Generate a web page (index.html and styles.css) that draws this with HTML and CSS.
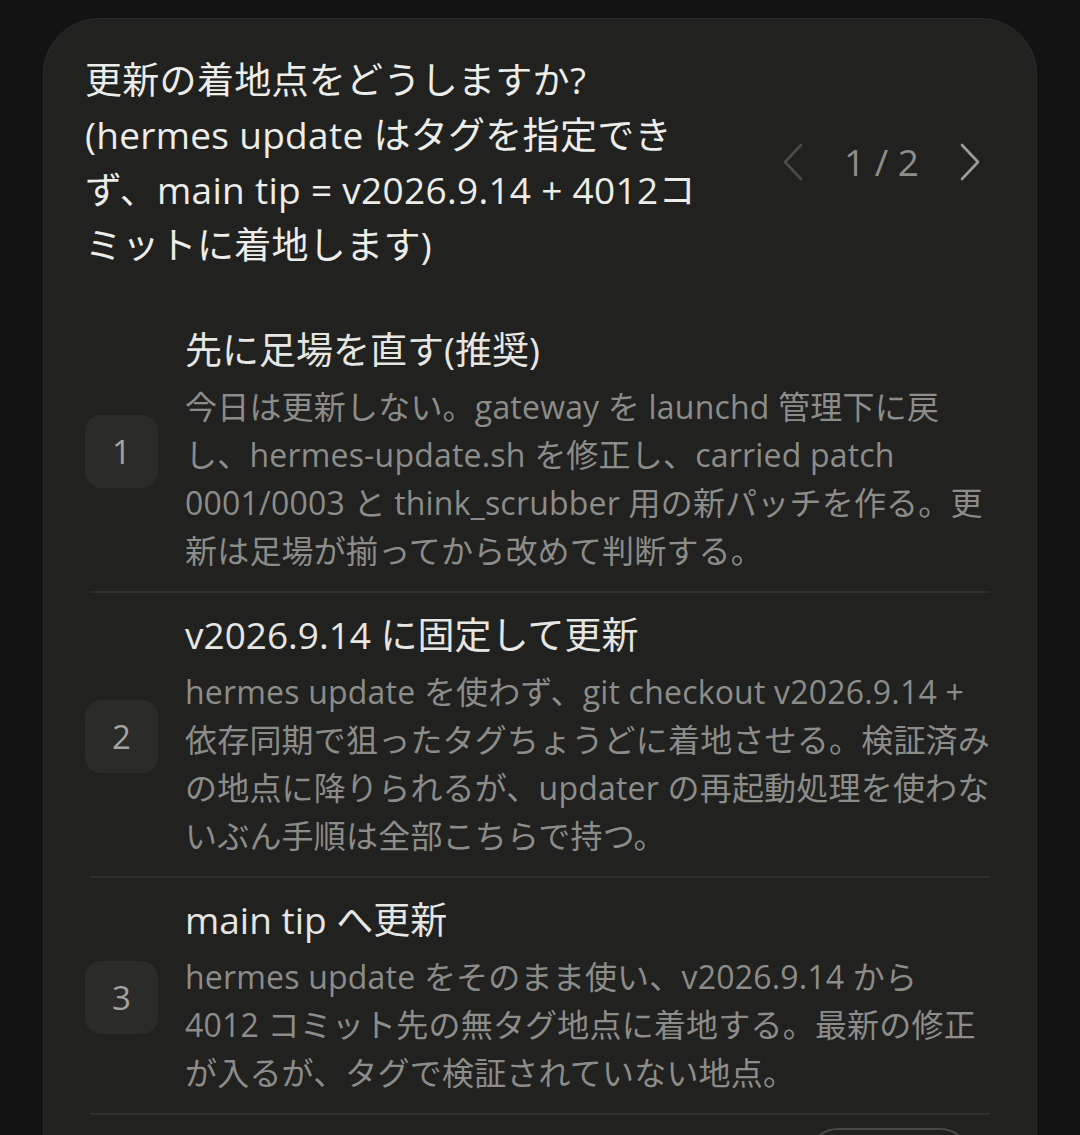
FILE: index.html
```html
<!DOCTYPE html>
<html lang="ja">
<head>
<meta charset="utf-8">
<title>更新の着地点</title>
<link rel="stylesheet" href="styles.css">
</head>
<body>
<div class="card">
  <div class="header">
    <div class="question">更新の着地点をどうしますか?<br>(hermes update はタグを指定でき<br>ず、main tip = v2026.9.14 + 4012コ<br>ミットに着地します)</div>
    <div class="pager">
      <svg class="chev chev-prev" width="22" height="38" viewBox="0 0 22 38"><path d="M19 2 L3 19 L19 36" fill="none" stroke="currentColor" stroke-width="2.6" stroke-linecap="round" stroke-linejoin="round"/></svg>
      <span class="pager-text">1 / 2</span>
      <svg class="chev chev-next" width="22" height="38" viewBox="0 0 22 38"><path d="M3 2 L19 19 L3 36" fill="none" stroke="currentColor" stroke-width="2.6" stroke-linecap="round" stroke-linejoin="round"/></svg>
    </div>
  </div>

  <div class="options">
    <div class="option">
      <div class="badge">1</div>
      <div class="option-body">
        <div class="option-title">先に足場を直す(推奨)</div>
        <div class="option-desc">今日は更新しない。gateway を launchd 管理下に戻<br>し、hermes-update.sh を修正し、carried patch<br>0001/0003 と think_scrubber 用の新パッチを作る。更<br>新は足場が揃ってから改めて判断する。</div>
      </div>
    </div>
    <div class="divider"></div>
    <div class="option">
      <div class="badge">2</div>
      <div class="option-body">
        <div class="option-title">v2026.9.14 に固定して更新</div>
        <div class="option-desc">hermes update を使わず、git checkout v2026.9.14 +<br>依存同期で狙ったタグちょうどに着地させる。検証済み<br>の地点に降りられるが、updater の再起動処理を使わな<br>いぶん手順は全部こちらで持つ。</div>
      </div>
    </div>
    <div class="divider"></div>
    <div class="option">
      <div class="badge">3</div>
      <div class="option-body">
        <div class="option-title">main tip へ更新</div>
        <div class="option-desc">hermes update をそのまま使い、v2026.9.14 から<br>4012 コミット先の無タグ地点に着地する。最新の修正<br>が入るが、タグで検証されていない地点。</div>
      </div>
    </div>
    <div class="divider"></div>
  </div>

  <div class="footer">
    <div class="pill"></div>
  </div>
</div>
</body>
</html>
```

FILE: styles.css
```css
html, body {
  margin: 0;
  padding: 0;
}
body {
  background: #131313;
  height: 1135px;
  overflow: hidden;
  font-family: "Open Sans", "Noto Sans CJK JP", sans-serif;
}
.card {
  margin: 18px 43px 0;
  background: #212120;
  border: 1px solid #2c2c2b;
  border-radius: 56px;
  padding: 33px 41px 60px;
  min-height: 1200px;
  box-sizing: border-box;
}
.header {
  display: flex;
  align-items: center;
  justify-content: space-between;
}
.question {
  color: #ecece9;
  font-size: 37px;
  line-height: 55px;
  letter-spacing: 0.3px;
  white-space: nowrap;
}
.pager {
  display: flex;
  align-items: center;
  gap: 40px;
  margin-right: 14px;
}
.chev {
  display: block;
}
.chev-prev {
  color: #4b4b4a;
}
.chev-next {
  color: #9d9d9a;
}
.pager-text {
  color: #8d8d8a;
  font-size: 37px;
  line-height: 44px;
  white-space: nowrap;
}
.options {
  margin-top: 36px;
}
.option {
  display: flex;
  align-items: center;
  gap: 27px;
  padding: 20px 0 16px;
}
.badge {
  flex: 0 0 auto;
  width: 73px;
  height: 73px;
  border-radius: 16px;
  background: #2b2b2a;
  color: #a3a3a0;
  font-size: 33px;
  display: flex;
  align-items: center;
  justify-content: center;
}
.option-body {
  flex: 1 1 auto;
  min-width: 0;
}
.option-title {
  color: #e6e6e3;
  font-size: 37px;
  line-height: 44px;
  white-space: nowrap;
}
.option-desc {
  margin-top: 11px;
  color: #8c8c89;
  font-size: 32px;
  line-height: 48px;
  letter-spacing: 0.2px;
  white-space: nowrap;
}
.divider {
  height: 2px;
  background: #2e2e2d;
  margin: 0 5px;
}
.footer {
  display: flex;
  justify-content: flex-end;
  padding-top: 13px;
  padding-right: 23px;
}
.pill {
  width: 162px;
  height: 60px;
  border: 2px solid #484847;
  border-radius: 32px;
}
```
